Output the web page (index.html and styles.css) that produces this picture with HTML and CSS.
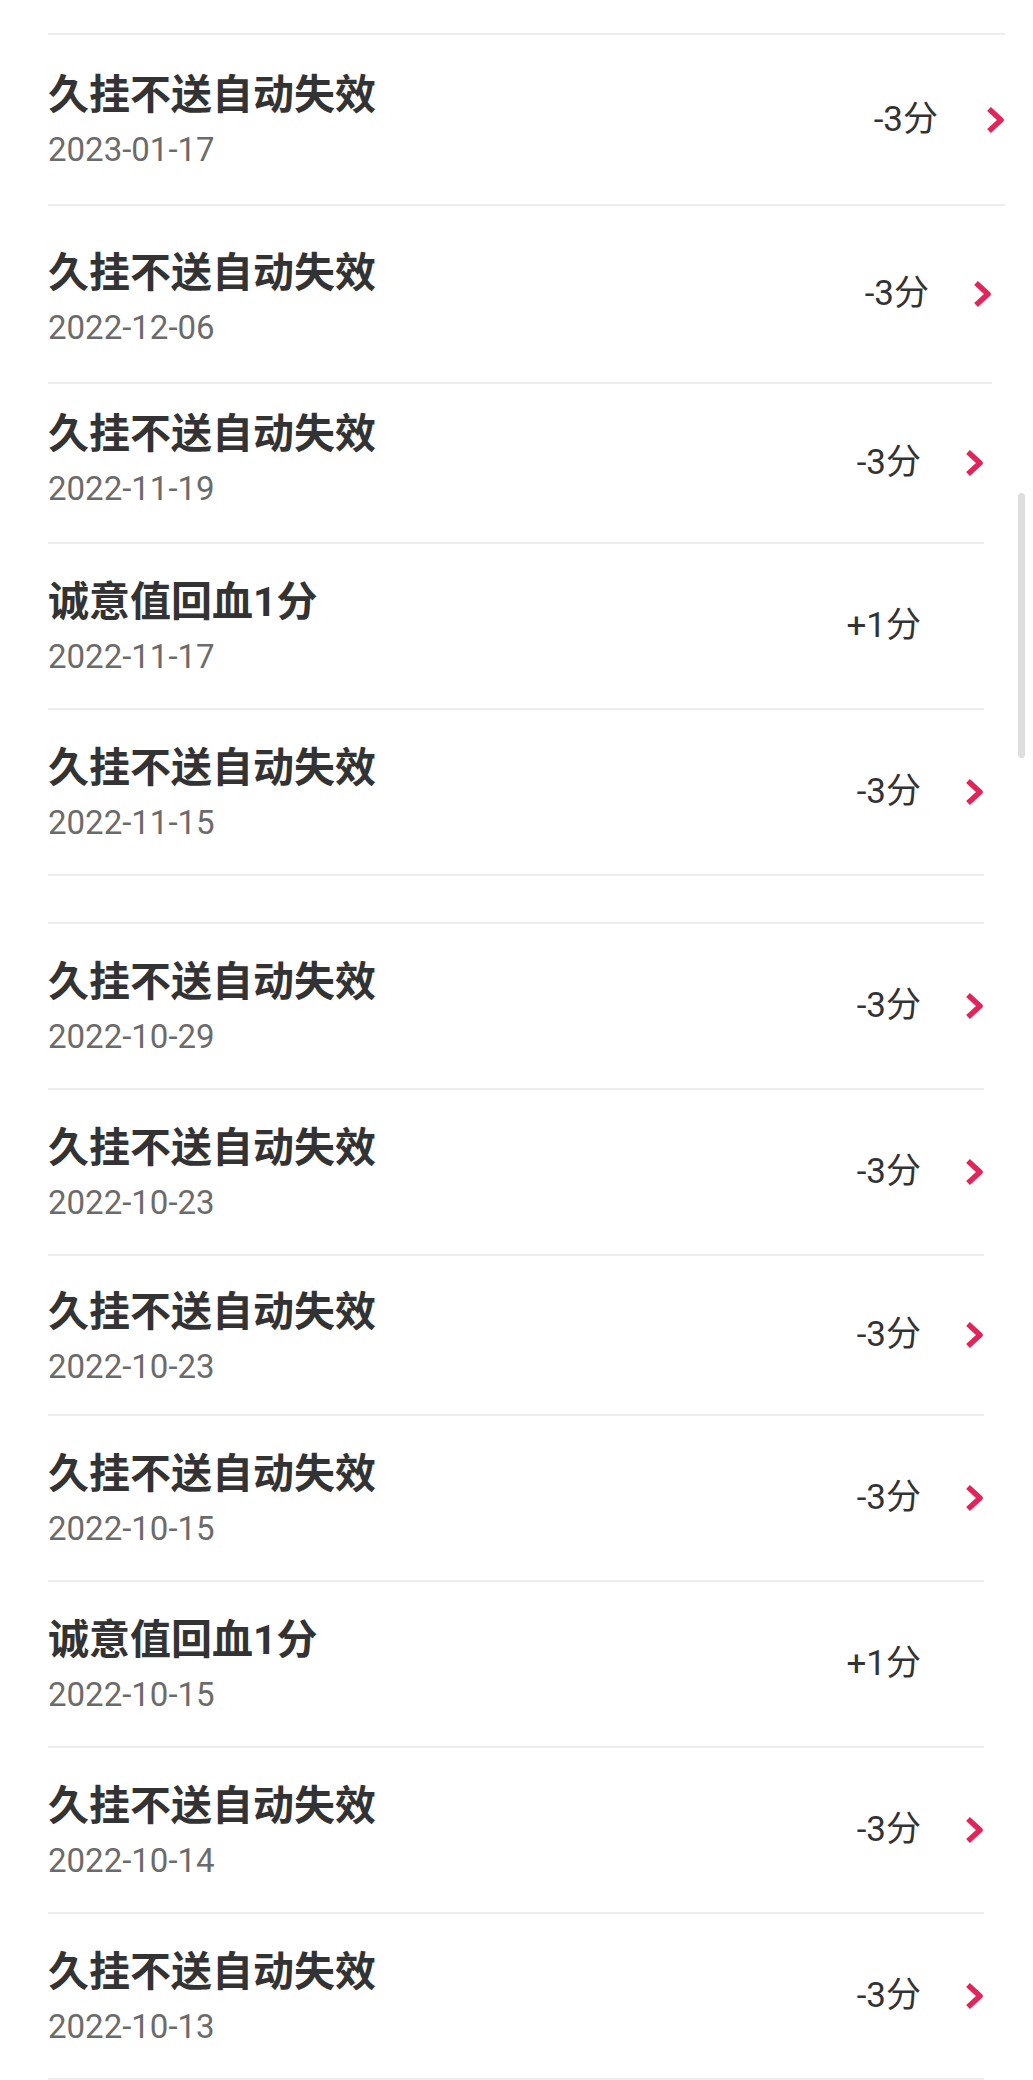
FILE: index.html
```html
<!DOCTYPE html>
<html lang="zh-CN">
<head>
<meta charset="UTF-8">
<meta name="viewport" content="width=device-width, initial-scale=1.0">
<title>诚意值记录</title>
<link rel="stylesheet" href="styles.css">
</head>
<body>

<div class="page">
    <ul class="record-list">
        <li class="record record--stretch-lg">
            <div class="record-main">
                <div class="record-title">久挂不送自动失效</div>
                <div class="record-date">2023-01-17</div>
            </div>
            <div class="record-side">
                <span class="record-score">-3分</span>
                <svg class="chevron" viewBox="0 0 19 28"><polyline points="3,3 15,14 3,25"/></svg>
            </div>
        </li>
        <li class="record record--stretch-sm">
            <div class="record-main">
                <div class="record-title">久挂不送自动失效</div>
                <div class="record-date">2022-12-06</div>
            </div>
            <div class="record-side">
                <span class="record-score">-3分</span>
                <svg class="chevron" viewBox="0 0 19 28"><polyline points="3,3 15,14 3,25"/></svg>
            </div>
        </li>
        <li class="record record--stretch-xs">
            <div class="record-main">
                <div class="record-title">久挂不送自动失效</div>
                <div class="record-date">2022-11-19</div>
            </div>
            <div class="record-side">
                <span class="record-score">-3分</span>
                <svg class="chevron" viewBox="0 0 19 28"><polyline points="3,3 15,14 3,25"/></svg>
            </div>
        </li>
        <li class="record">
            <div class="record-main">
                <div class="record-title">诚意值回血1分</div>
                <div class="record-date">2022-11-17</div>
            </div>
            <div class="record-side">
                <span class="record-score">+1分</span>
                <svg class="chevron chevron--off" viewBox="0 0 19 28"><polyline points="3,3 15,14 3,25"/></svg>
            </div>
        </li>
        <li class="record">
            <div class="record-main">
                <div class="record-title">久挂不送自动失效</div>
                <div class="record-date">2022-11-15</div>
            </div>
            <div class="record-side">
                <span class="record-score">-3分</span>
                <svg class="chevron" viewBox="0 0 19 28"><polyline points="3,3 15,14 3,25"/></svg>
            </div>
        </li>
        <!-- next page of records -->
        <li class="record-break"></li>
        <li class="record">
            <div class="record-main">
                <div class="record-title">久挂不送自动失效</div>
                <div class="record-date">2022-10-29</div>
            </div>
            <div class="record-side">
                <span class="record-score">-3分</span>
                <svg class="chevron" viewBox="0 0 19 28"><polyline points="3,3 15,14 3,25"/></svg>
            </div>
        </li>
        <li class="record">
            <div class="record-main">
                <div class="record-title">久挂不送自动失效</div>
                <div class="record-date">2022-10-23</div>
            </div>
            <div class="record-side">
                <span class="record-score">-3分</span>
                <svg class="chevron" viewBox="0 0 19 28"><polyline points="3,3 15,14 3,25"/></svg>
            </div>
        </li>
        <li class="record record--short">
            <div class="record-main">
                <div class="record-title">久挂不送自动失效</div>
                <div class="record-date">2022-10-23</div>
            </div>
            <div class="record-side">
                <span class="record-score">-3分</span>
                <svg class="chevron" viewBox="0 0 19 28"><polyline points="3,3 15,14 3,25"/></svg>
            </div>
        </li>
        <li class="record">
            <div class="record-main">
                <div class="record-title">久挂不送自动失效</div>
                <div class="record-date">2022-10-15</div>
            </div>
            <div class="record-side">
                <span class="record-score">-3分</span>
                <svg class="chevron" viewBox="0 0 19 28"><polyline points="3,3 15,14 3,25"/></svg>
            </div>
        </li>
        <li class="record">
            <div class="record-main">
                <div class="record-title">诚意值回血1分</div>
                <div class="record-date">2022-10-15</div>
            </div>
            <div class="record-side">
                <span class="record-score">+1分</span>
                <svg class="chevron chevron--off" viewBox="0 0 19 28"><polyline points="3,3 15,14 3,25"/></svg>
            </div>
        </li>
        <li class="record">
            <div class="record-main">
                <div class="record-title">久挂不送自动失效</div>
                <div class="record-date">2022-10-14</div>
            </div>
            <div class="record-side">
                <span class="record-score">-3分</span>
                <svg class="chevron" viewBox="0 0 19 28"><polyline points="3,3 15,14 3,25"/></svg>
            </div>
        </li>
        <li class="record">
            <div class="record-main">
                <div class="record-title">久挂不送自动失效</div>
                <div class="record-date">2022-10-13</div>
            </div>
            <div class="record-side">
                <span class="record-score">-3分</span>
                <svg class="chevron" viewBox="0 0 19 28"><polyline points="3,3 15,14 3,25"/></svg>
            </div>
        </li>
    </ul>
</div>

<div class="scrollbar"></div>

</body>
</html>
```

FILE: styles.css
```css
/* page */
html, body {
    margin: 0;
    height: 100%;
    overflow: hidden;
}
body {
    background-color: #fff;
    font-family: Roboto, "Noto Sans CJK SC", sans-serif;
    color: #333;
}
.page {
    padding: 33px 49px 0 48px;
}

/* list */
.record-list {
    list-style: none;
    margin: 0;
    padding: 0;
}
.record {
    display: flex;
    align-items: center;
    justify-content: space-between;
    border-bottom: 2px solid #ededed;
}
.record-main {
    padding: 34px 0 31px;
}
.record-title {
    font-family: Roboto, "Noto Sans CJK SC", sans-serif;
    font-weight: 700;
    font-size: 41px;
    line-height: 48px;
    color: #333;
}
.record-date {
    margin-top: 11px;
    font-size: 33px;
    line-height: 40px;
    color: #6b6b6b;
}
.record-side {
    display: flex;
    align-items: center;
}
.record-score {
    font-size: 35px;
    line-height: 40px;
    color: #333;
}
.chevron {
    width: 19px;
    height: 28px;
    margin-left: 44px;
    fill: none;
    stroke: #e2245a;
    stroke-width: 5.5;
    stroke-linecap: butt;
    stroke-linejoin: round;
}
.chevron--off {
    visibility: hidden;
}

.record--stretch-lg {
    margin-right: -21px;
    border-top: 2px solid #ededed;
}
.record--stretch-lg .record-main {
    padding: 36px 0 34px;
}
.record--stretch-lg .chevron {
    margin-left: 48px;
}
.record--stretch-sm {
    margin-right: -8px;
}
.record--stretch-sm .record-main {
    padding: 43px 0 34px;
}
.record--stretch-xs .record-main {
    padding: 26px 0 33px;
}
.record--short .record-main {
    padding: 32px 0 27px;
}

.record-break {
    height: 46px;
    border-bottom: 2px solid #ededed;
}

/* scroll indicator, drawn over the list */
.scrollbar {
    position: absolute;
    top: 493px;
    left: 1018px;
    width: 7px;
    height: 265px;
    border-radius: 4px;
    background-color: #dedede;
}
```
